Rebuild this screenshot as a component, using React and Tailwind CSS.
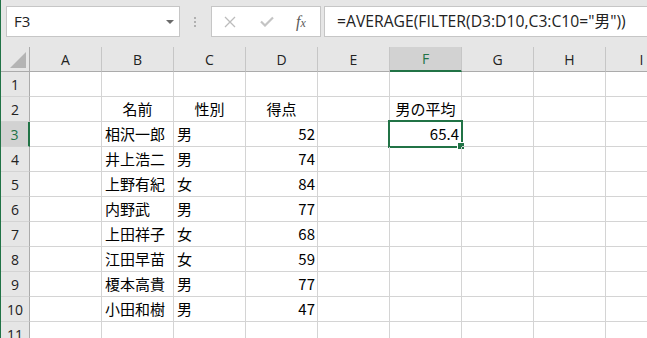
import React from "react";

const cols = ["A", "B", "C", "D", "E", "F", "G", "H", "I"];

const rows = [
  {},
  { B: "名前", C: "性別", D: "得点", F: "男の平均", head: true },
  { B: "相沢一郎", C: "男", D: "52", F: "65.4" },
  { B: "井上浩二", C: "男", D: "74" },
  { B: "上野有紀", C: "女", D: "84" },
  { B: "内野武", C: "男", D: "77" },
  { B: "上田祥子", C: "女", D: "68" },
  { B: "江田早苗", C: "女", D: "59" },
  { B: "榎本高貴", C: "男", D: "77" },
  { B: "小田和樹", C: "男", D: "47" },
  {},
];

const cellFont = { fontFamily: '"Noto Sans CJK JP", sans-serif' };
const uiFont = { fontFamily: '"Open Sans", "Noto Sans CJK JP", sans-serif' };

function clsx(...a) {
  return a.filter(Boolean).join(" ");
}

const Toolbar = () => (
  <div className="h-[47px] shrink-0 bg-[#e6e6e6] flex items-start pt-[6px] pl-[5px]" style={uiFont}>
    <div className="w-[174px] h-[31px] shrink-0 border border-[#c6c6c6] bg-white flex items-center justify-between pl-[7px] pr-[5px]">
      <span className="text-[15px] text-[#222] leading-none">F3</span>
      <span className="w-0 h-0 border-l-[4px] border-r-[4px] border-t-[4px] border-l-transparent border-r-transparent border-t-[#6a6a6a]" />
    </div>
    <div className="w-[31px] h-[31px] shrink-0 flex flex-col items-center justify-center gap-[2px] pr-[1px]">
      <span className="w-[2px] h-[2px] bg-[#b0b0b0]" />
      <span className="w-[2px] h-[2px] bg-[#b0b0b0]" />
      <span className="w-[2px] h-[2px] bg-[#b0b0b0]" />
    </div>
    <div className="w-[110px] h-[31px] shrink-0 border border-[#c6c6c6] bg-white flex items-center">
      <svg width="12" height="12" viewBox="0 0 12 12" className="ml-[12px]">
        <path d="M1 1 L11 11 M11 1 L1 11" stroke="#bcbcbc" strokeWidth="1.3" fill="none" />
      </svg>
      <svg width="14" height="11" viewBox="0 0 14 11" className="ml-[24px]">
        <path d="M1 5.5 L5 9.5 L13 1.5" stroke="#c4c4c4" strokeWidth="2.2" fill="none" />
      </svg>
      <span
        className="ml-[22px] text-[#5a5a5a] italic leading-none"
        style={{ fontFamily: '"Liberation Serif", serif' }}
      >
        <span className="text-[16px]">f</span>
        <span className="text-[12px]">x</span>
      </span>
    </div>
    <div className="ml-[3px] flex-1 h-[31px] border-y border-l border-[#c6c6c6] bg-white flex items-center pl-[12px] whitespace-nowrap">
      <span className="text-[15.7px] text-[#222] leading-none">=AVERAGE(FILTER(D3:D10,C3:C10="男"))</span>
    </div>
  </div>
);

const HeaderRow = () => (
  <div className="flex h-[25px] shrink-0">
    <div className="w-[29px] h-[25px] shrink-0 bg-[#e6e6e6] border-r border-b border-[#ababab] flex items-end justify-end pr-[3px] pb-[3px]">
      <svg width="16" height="16" viewBox="0 0 16 16">
        <path d="M16 0 L16 16 L0 16 Z" fill="#b4b4b4" />
      </svg>
    </div>
    {cols.map((c) =>
      c === "F" ? (
        <div
          key={c}
          className="w-[72px] h-[25px] shrink-0 bg-[#d2d2d2] border-r border-r-[#c6c6c6] border-b-2 border-b-[#217346] flex items-center justify-center text-[14px] text-[#217346]"
          style={uiFont}
        >
          {c}
        </div>
      ) : (
        <div
          key={c}
          className="w-[72px] h-[25px] shrink-0 bg-[#e6e6e6] border-r border-r-[#c6c6c6] border-b border-b-[#ababab] flex items-center justify-center text-[14px] text-[#222]"
          style={uiFont}
        >
          {c}
        </div>
      )
    )}
  </div>
);

const Cell = ({ col, value, head, selected }) => {
  const right = col === "D" || (col === "F" && !head);
  return (
    <div
      className={clsx(
        "w-[72px] h-[25px] shrink-0 border-r border-b border-[#d4d4d4] flex items-center text-[15px] text-black whitespace-nowrap relative",
        head ? "justify-center" : right ? "justify-end pr-[2px]" : "justify-start pl-[3px]"
      )}
      style={cellFont}
    >
      {value}
      {selected && (
        <>
          <div className="absolute left-[-2px] top-[-2px] w-[75px] h-[28px] border-2 border-[#217346] pointer-events-none" />
          <div className="absolute left-[67px] top-[20px] w-[8px] h-[8px] bg-[#217346] border border-white" />
        </>
      )}
    </div>
  );
};

export default function App() {
  return (
    <div className="w-[647px] h-[338px] overflow-hidden bg-white flex">
      <div className="w-px shrink-0 bg-[#217346]" />
      <div className="flex-1 flex flex-col min-w-0">
        <Toolbar />
        <HeaderRow />
        {rows.map((r, i) => {
          const n = i + 1;
          const sel = n === 3;
          return (
            <div key={n} className="flex h-[25px] shrink-0">
              <div
                className={clsx(
                  "w-[29px] h-[25px] shrink-0 border-b border-b-[#d4d4d4] flex items-center justify-center text-[14px]",
                  sel
                    ? "bg-[#d2d2d2] border-r-2 border-r-[#217346] text-[#217346]"
                    : "bg-[#e6e6e6] border-r border-r-[#ababab] text-[#222]"
                )}
                style={uiFont}
              >
                {n}
              </div>
              {cols.map((c) => (
                <Cell key={c} col={c} value={r[c]} head={r.head} selected={sel && c === "F"} />
              ))}
            </div>
          );
        })}
      </div>
    </div>
  );
}
